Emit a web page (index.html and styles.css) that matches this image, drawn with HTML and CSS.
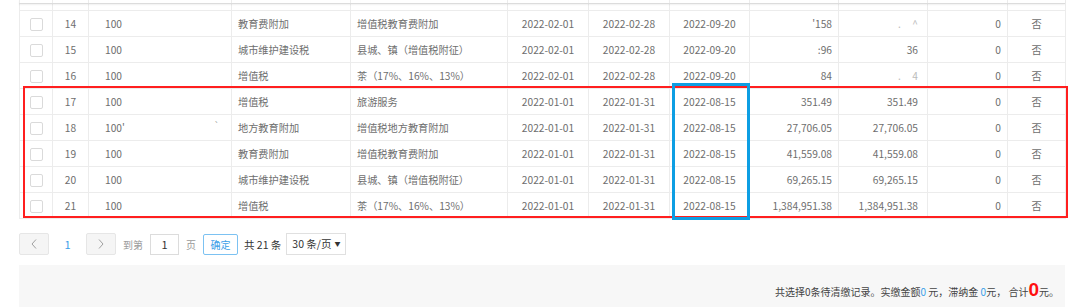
FILE: index.html
```html
<!DOCTYPE html>
<html lang="zh-CN">
<head>
<meta charset="utf-8">
<link rel="stylesheet" href="styles.css">
</head>
<body>
<div class="page">
  <div class="head-shadow"></div>
  <div class="table-wrap">
    <table class="grid">
      <colgroup>
        <col class="c-chk"><col class="c-no"><col class="c-id"><col class="c-tax"><col class="c-item">
        <col class="c-date"><col class="c-date"><col class="c-due"><col class="c-amt"><col class="c-amt">
        <col class="c-late"><col class="c-flag">
      </colgroup>
      <tbody>
        <tr><td></td><td></td><td></td><td></td><td></td><td></td><td></td><td></td><td></td><td></td><td></td><td></td></tr>
        <tr><td class="ck"><span class="box"></span></td><td class="ctr">14</td><td class="id">100</td><td>教育费附加</td><td>增值税教育费附加</td><td class="ctr">2022-02-01</td><td class="ctr">2022-02-28</td><td class="ctr">2022-09-20</td><td class="num">'158</td><td class="num n2"><span class="blur">.&nbsp;&nbsp;&nbsp;&nbsp;&nbsp;^</span></td><td class="num">0</td><td class="ctr">否</td></tr>
        <tr><td class="ck"><span class="box"></span></td><td class="ctr">15</td><td class="id">100</td><td>城市维护建设税</td><td>县城、镇（增值税附征）</td><td class="ctr">2022-02-01</td><td class="ctr">2022-02-28</td><td class="ctr">2022-09-20</td><td class="num">:96</td><td class="num n2">36</td><td class="num">0</td><td class="ctr">否</td></tr>
        <tr><td class="ck"><span class="box"></span></td><td class="ctr">16</td><td class="id">100</td><td>增值税</td><td>茶（17%、16%、13%）</td><td class="ctr">2022-02-01</td><td class="ctr">2022-02-28</td><td class="ctr">2022-09-20</td><td class="num">84</td><td class="num n2"><span class="blur">.&nbsp;&nbsp;&nbsp;&nbsp;&nbsp;4</span></td><td class="num">0</td><td class="ctr">否</td></tr>
        <tr><td class="ck"><span class="box"></span></td><td class="ctr">17</td><td class="id">100</td><td>增值税</td><td>旅游服务</td><td class="ctr">2022-01-01</td><td class="ctr">2022-01-31</td><td class="ctr">2022-08-15</td><td class="num">351.49</td><td class="num n2">351.49</td><td class="num">0</td><td class="ctr">否</td></tr>
        <tr><td class="ck"><span class="box"></span></td><td class="ctr">18</td><td class="id">100'<span class="tick">`</span></td><td>地方教育附加</td><td>增值税地方教育附加</td><td class="ctr">2022-01-01</td><td class="ctr">2022-01-31</td><td class="ctr">2022-08-15</td><td class="num">27,706.05</td><td class="num n2">27,706.05</td><td class="num">0</td><td class="ctr">否</td></tr>
        <tr><td class="ck"><span class="box"></span></td><td class="ctr">19</td><td class="id">100</td><td>教育费附加</td><td>增值税教育费附加</td><td class="ctr">2022-01-01</td><td class="ctr">2022-01-31</td><td class="ctr">2022-08-15</td><td class="num">41,559.08</td><td class="num n2">41,559.08</td><td class="num">0</td><td class="ctr">否</td></tr>
        <tr><td class="ck"><span class="box"></span></td><td class="ctr">20</td><td class="id">100</td><td>城市维护建设税</td><td>县城、镇（增值税附征）</td><td class="ctr">2022-01-01</td><td class="ctr">2022-01-31</td><td class="ctr">2022-08-15</td><td class="num">69,265.15</td><td class="num n2">69,265.15</td><td class="num">0</td><td class="ctr">否</td></tr>
        <tr><td class="ck"><span class="box"></span></td><td class="ctr">21</td><td class="id">100</td><td>增值税</td><td>茶（17%、16%、13%）</td><td class="ctr">2022-01-01</td><td class="ctr">2022-01-31</td><td class="ctr">2022-08-15</td><td class="num">1,384,951.38</td><td class="num n2">1,384,951.38</td><td class="num">0</td><td class="ctr">否</td></tr>
      </tbody>
    </table>
    <div class="mark-red"></div>
    <div class="mark-blue"></div>
  </div>

  <div class="pager">
    <span class="pbtn"><svg width="8" height="12" viewBox="0 0 8 12"><path d="M6 1.5 L2 6 L6 10.5" fill="none" stroke="#a0a0a0" stroke-width="1"/></svg></span>
    <span class="cur">1</span>
    <span class="pbtn"><svg width="8" height="12" viewBox="0 0 8 12"><path d="M2 1.5 L6 6 L2 10.5" fill="none" stroke="#a0a0a0" stroke-width="1"/></svg></span>
    <span class="lbl">到第</span>
    <span class="pinput">1</span>
    <span class="lbl">页</span>
    <span class="ok">确定</span>
    <span class="total">共 21 条</span>
    <span class="psize">30 条/页<span class="caret">▼</span></span>
  </div>

  <div class="summary">
    <span>共选择0条待清缴记录。实缴金额<span class="blue">0</span> 元，滞纳金 <span class="blue">0</span>元， 合计<span class="big">0</span>元。</span>
  </div>
</div>
</body>
</html>
```

FILE: styles.css
```css
html, body {
  margin: 0;
  padding: 0;
  background: #fff;
  overflow: hidden;
}
.page {
  width: 1080px;
  height: 307px;
  position: relative;
  overflow: hidden;
  font-family: "Noto Sans CJK SC", "Microsoft YaHei", sans-serif;
  font-size: 10px;
  color: #6e6e6e;
}
.head-shadow {
  position: absolute;
  left: 19px;
  top: 0;
  width: 1046px;
  height: 3px;
  border-bottom: 1px solid #dcdcdc;
  box-shadow: 0 1px 2px rgba(0,0,0,0.06);
  z-index: 2;
}
.table-wrap {
  position: relative;
  margin: -16px 0 0 19px;
  width: 1046px;
}
.grid {
  width: 1046px;
  table-layout: fixed;
  border-collapse: collapse;
}
.c-chk { width: 33px; }
.c-no { width: 36px; }
.c-id { width: 143px; }
.c-tax { width: 119px; }
.c-item { width: 157px; }
.c-date { width: 81px; }
.c-due { width: 80px; }
.c-amt { width: 89px; }
.c-late { width: 80px; }
.c-flag { width: 58px; }
.grid td {
  height: 25px;
  padding: 0 6px;
  border: 1px solid #ececec;
  font-size: 10.2px;
  line-height: 14px;
  white-space: nowrap;
  overflow: hidden;
  vertical-align: middle;
  color: #6e6e6e;
}
.grid td.ctr { text-align: center; padding: 0; }
.grid td.num { text-align: right; }
.grid td.n2 { padding-right: 9px; }
.grid td.id { padding-left: 16px; position: relative; }
.tick { position: absolute; left: 125px; top: 4px; font-size: 9px; color: #999; }
.blur { color: #bbb; }
.grid td.ck { text-align: center; padding: 0; }
.box {
  display: inline-block;
  width: 11px;
  height: 11px;
  border: 1px solid #dadada;
  border-radius: 2px;
  background: #fff;
  vertical-align: middle;
}
.mark-red {
  position: absolute;
  left: 4px;
  top: 102px;
  width: 1041px;
  height: 128px;
  border: 2px solid #ff1f1f;
  pointer-events: none;
}
.mark-blue {
  position: absolute;
  left: 653px;
  top: 99px;
  width: 72px;
  height: 131px;
  border: 3px solid #0d9ee3;
  pointer-events: none;
}
.pager {
  display: flex;
  align-items: center;
  height: 22px;
  margin: 14px 0 0 19px;
  white-space: nowrap;
  font-size: 10px;
}
.pager > span { flex-shrink: 0; }
.pbtn {
  display: flex;
  align-items: center;
  justify-content: center;
  width: 28px;
  height: 20px;
  border: 1px solid #e6e6e6;
  border-radius: 2px;
  background: #f5f5f5;
}
.cur {
  width: 37px;
  text-align: center;
  color: #3b9ee8;
  font-size: 11px;
}
.lbl { color: #9a9a9a; margin: 0 7px; }
.pinput {
  width: 27px;
  height: 19px;
  border: 1px solid #dcdcdc;
  text-align: center;
  line-height: 19px;
  color: #333;
  font-size: 11px;
}
.ok {
  width: 33px;
  height: 19px;
  line-height: 19px;
  border: 1px solid #7cc2f2;
  border-radius: 2px;
  text-align: center;
  color: #3b9ee8;
  font-size: 10px;
}
.total { color: #333; margin-left: 6px; font-size: 10.5px; }
.psize {
  margin-left: 5px;
  height: 20px;
  width: 50px;
  border: 1px solid #e0e0e0;
  line-height: 20px;
  color: #333;
  padding: 0 3px 0 5px;
  font-size: 10.5px;
}
.caret { font-size: 6px; vertical-align: 2px; margin-left: 3px; }
.summary {
  margin: 10px 0 0 19px;
  width: 1046px;
  height: 60px;
  background: #f7f7f7;
  display: flex;
  justify-content: flex-end;
  align-items: flex-start;
  padding-top: 17px;
  box-sizing: border-box;
  padding-right: 6px;
  color: #444;
  font-size: 10px;
  line-height: 16px;
}
.blue { color: #3b9ee8; }
.big {
  color: #ff1010;
  font-size: 19px;
  font-weight: bold;
  font-family: "Liberation Sans", Arial, sans-serif;
  line-height: 16px;
}
```
